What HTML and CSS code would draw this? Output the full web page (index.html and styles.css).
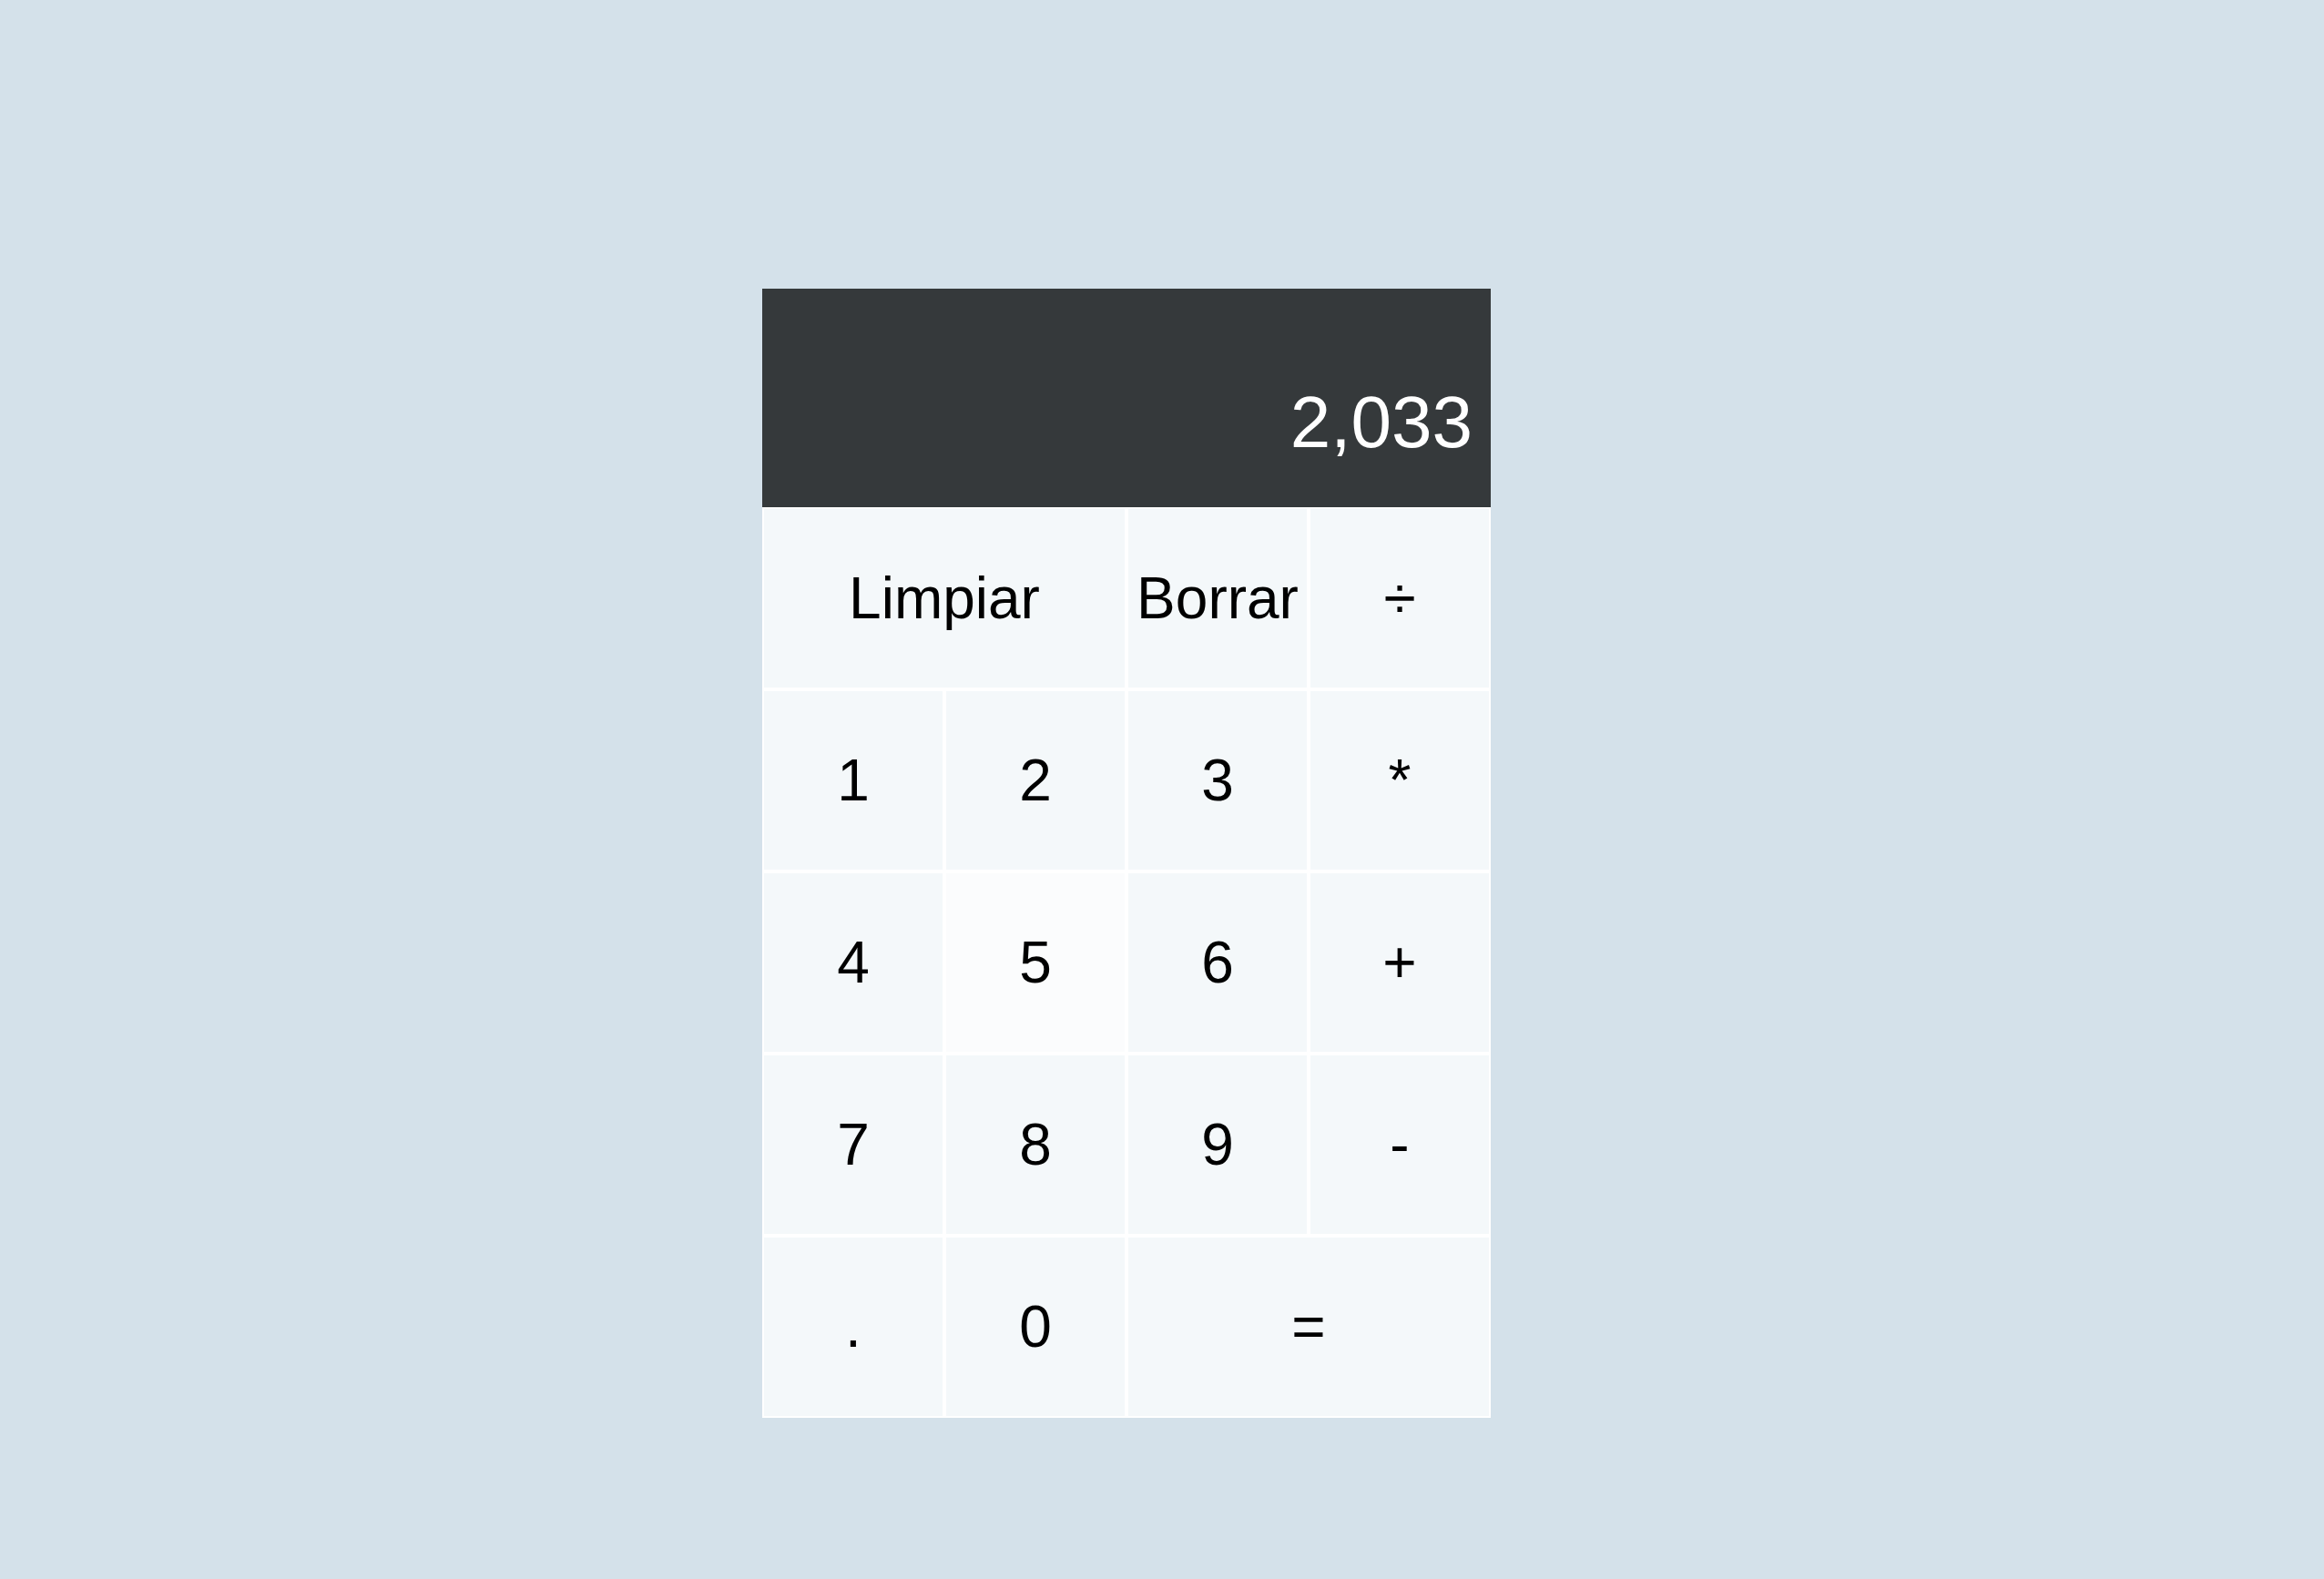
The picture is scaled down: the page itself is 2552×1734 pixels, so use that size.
FILE: index.html
```html
<!DOCTYPE html>
<html lang="es">
<head>
<meta charset="utf-8">
<title>Calculadora</title>
<link rel="stylesheet" href="styles.css">
</head>
<body>
<div class="page">
  <div class="calculator-grid">
    <div class="output">
      <div class="previous-operand"></div>
      <div class="current-operand">2,033</div>
    </div>
    <button class="key span-two">Limpiar</button>
    <button class="key">Borrar</button>
    <button class="key">÷</button>
    <button class="key">1</button>
    <button class="key">2</button>
    <button class="key">3</button>
    <button class="key">*</button>
    <button class="key">4</button>
    <button class="key key-hover">5</button>
    <button class="key">6</button>
    <button class="key">+</button>
    <button class="key">7</button>
    <button class="key">8</button>
    <button class="key">9</button>
    <button class="key">-</button>
    <button class="key">.</button>
    <button class="key">0</button>
    <button class="key span-two">=</button>
  </div>
</div>
</body>
</html>
```

FILE: styles.css
```css
* {
  box-sizing: border-box;
}

html, body {
  margin: 0;
  padding: 0;
}

body {
  background-color: #d4e1ea;
  font-family: "Liberation Sans", Arial, Helvetica, sans-serif;
  min-height: 100vh;
}

.page {
  padding: 317px 0 0 837px;
}

.calculator-grid {
  display: grid;
  grid-template-columns: repeat(4, 200px);
  grid-template-rows: 240px repeat(5, 200px);
}

.output {
  grid-column: 1 / -1;
  background-color: rgba(0, 0, 0, 0.75);
  display: flex;
  flex-direction: column;
  align-items: flex-end;
  justify-content: space-around;
  padding: 20px;
  word-wrap: break-word;
  word-break: break-all;
}

.previous-operand {
  color: rgba(255, 255, 255, 0.75);
  font-size: 48px;
}

.current-operand {
  color: #ffffff;
  font-size: 80px;
}

.key {
  font-family: "Liberation Sans", Arial, Helvetica, sans-serif;
  font-size: 64px;
  color: #000000;
  border: 2px solid #ffffff;
  outline: none;
  background-color: rgba(255, 255, 255, 0.75);
  cursor: pointer;
  padding: 0;
  margin: 0;
}

.key-hover {
  background-color: rgba(255, 255, 255, 0.9);
}

.span-two {
  grid-column: span 2;
}
```
